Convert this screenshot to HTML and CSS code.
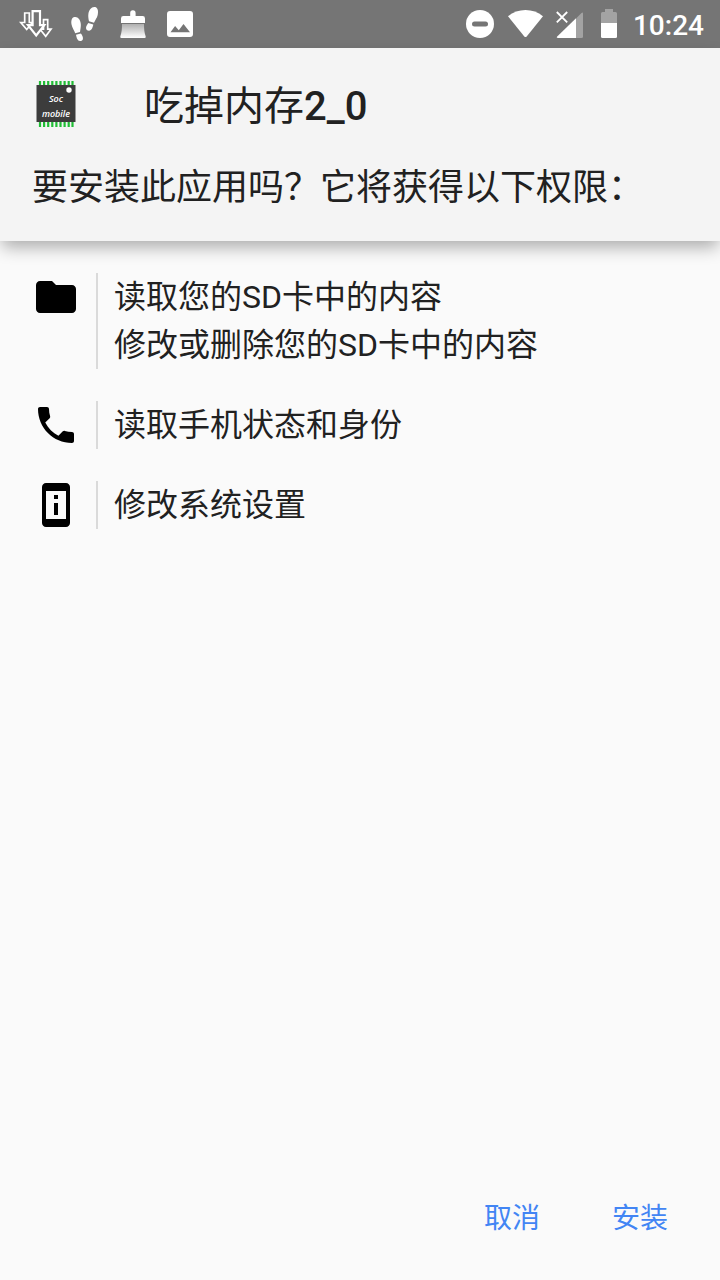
FILE: index.html
```html
<!DOCTYPE html>
<html lang="zh-CN">
<head>
<meta charset="utf-8">
<meta name="viewport" content="width=device-width, initial-scale=1">
<title>吃掉内存2_0</title>
<link rel="stylesheet" href="styles.css">
</head>
<body>
<div class="screen">
  <div class="status-bar">
    <div class="status-group">
      <svg class="status-icon" viewBox="0 0 48 48" aria-hidden="true">
        <g fill="#757575" stroke="#fff" stroke-width="1.7">
          <path d="M12.7 13h4.6v9.5h3.2L14.7 29.500 8.800 22.500h3.900z"/>
          <path d="M31.500 19.700h4.200v9.500h3.300L33.700 36.300 28 29.200h3.500z"/>
          <path stroke-width="2.200" d="M20.600 11.100h7.400v14h4.300L24.200 35.500 16 25.100h4.600z"/>
        </g>
      </svg>
      <svg class="status-icon" viewBox="0 0 48 48" aria-hidden="true">
        <g fill="#fff">
          <path d="M14.500 17c3.300-.6 6 2.600 6.300 7 .2 2.800-.4 5.500-.8 8l-4.800 1.300c-.8-2.700-3-5.600-3.600-8.600-.8-4 .2-7.200 2.900-7.700z"/>
          <path d="M16 34.700l4.900-1.200c1.300 1.600 2.400 3.800 2 5.500-.3 1.500-1.500 2.100-3 2-2.300-.2-3.300-3-3.900-6.300z"/>
          <path d="M35 7c2.800.5 3.600 4 2.700 8-.7 3-2.700 5.300-3.700 7.800l-5-1.500c-.5-2.400-1-4.800-.6-7.500.6-4.200 3.300-7.400 6.600-6.800z"/>
          <path d="M28.300 23l5 1.500c-.6 3.100-1.800 6-4.200 6.200-1.700.1-3.100-1-3.100-2.700 0-1.600 1.200-3.500 2.300-5z"/>
        </g>
      </svg>
      <svg class="status-icon" viewBox="0 0 48 48" aria-hidden="true">
        <defs>
          <linearGradient id="bristles" x1="0" y1="0" x2="0" y2="1">
            <stop offset="0" stop-color="#b0b0b0"/>
            <stop offset="1" stop-color="#fff"/>
          </linearGradient>
        </defs>
        <path fill="#fff" d="M22.200 16v-3a2.700 2.700 0 0 1 5.400 0v3h7a2.400 2.400 0 0 1 2.400 2.400V23H13v-4.600a2.400 2.400 0 0 1 2.400-2.400z"/>
        <path fill="url(#bristles)" d="M14 24h22c0 5 .3 8.500 1.700 12.500q.3 1.500-1.200 1.500h-23q-1.500 0-1.200-1.500C13.700 32.500 14 29 14 24z"/>
      </svg>
      <svg class="status-icon" viewBox="0 0 48 48" aria-hidden="true">
        <path fill="#fff" fill-rule="evenodd" d="M14 11h20a3 3 0 0 1 3 3v20a3 3 0 0 1-3 3H14a3 3 0 0 1-3-3V14a3 3 0 0 1 3-3zm.5 21.300h19.500L27.500 24l-4.700 6.200-3.700-4.300z"/>
      </svg>
    </div>
    <div class="status-group">
      <svg class="status-icon" viewBox="0 0 48 48" aria-hidden="true">
        <circle cx="24" cy="24" r="14" fill="#fff"/>
        <path d="M18.500 24h11" stroke="#757575" stroke-width="5" stroke-linecap="round"/>
      </svg>
      <svg class="status-icon status-medium" viewBox="0 0 44 48" aria-hidden="true">
        <path fill="#fff" d="M4 16.200C9 12 15 10 21.500 10S34 12 39 16.200L22.700 36.500q-1.200 1.200-2.400 0z"/>
      </svg>
      <svg class="status-icon status-medium" viewBox="0 0 44 48" aria-hidden="true">
        <path fill="#a3a3a3" d="M28 18.500L33.500 13q1.500-1.300 1.500.5V36.500q0 1.500-1.500 1.500H28z"/>
        <path fill="#fff" d="M28 18.300V38H10q-2-.1-.8-1.500z"/>
        <path d="M8.800 12l10.400 10.400M19.200 12L8.800 22.400" stroke="#fff" stroke-width="1.800"/>
      </svg>
      <svg class="status-icon status-small" viewBox="0 0 34 48" aria-hidden="true">
        <path fill="#a3a3a3" d="M13 9h8v3h2.500q1.500 0 1.500 1.500V24H9V13.500Q9 12 10.500 12H13z"/>
        <path fill="#fff" d="M9 23h16v13.500q0 1.500-1.500 1.500h-13Q9 38 9 36.500z"/>
      </svg>
      <time class="clock">10:24</time>
    </div>
  </div>

  <header class="header">
    <div class="app-row">
      <svg class="app-icon" viewBox="0 0 48 48" role="img" aria-label="Soc mobile">
        <path d="M8 1v46M12.100 1v46M16.200 1v46M20.300 1v46M24.400 1v46M28.500 1v46M32.600 1v46M36.700 1v46M40.500 1v46" stroke="#20bd35" stroke-width="2.200"/>
        <rect x="4.500" y="5" width="39" height="37" fill="#3c3c3c"/>
        <circle cx="37" cy="10" r="2.700" fill="#fff"/>
        <text class="chip-text" x="24" y="22">Soc</text>
        <text class="chip-text" x="24" y="37">mobile</text>
      </svg>
      <h1 class="app-name">吃掉内存<span class="app-version">2_0</span></h1>
    </div>
    <p class="prompt">要安装此应用吗？它将获得以下权限：</p>
  </header>

  <main class="permissions">
    <section class="permission">
      <svg class="permission-icon" viewBox="0 0 24 24" aria-hidden="true">
        <path d="M10 4H4c-1.100 0-1.990.9-1.990 2L2 18c0 1.100.9 2 2 2h16c1.100 0 2-.9 2-2V8c0-1.100-.9-2-2-2h-8l-2-2z"/>
      </svg>
      <ul class="permission-list">
        <li>读取您的SD卡中的内容</li>
        <li>修改或删除您的SD卡中的内容</li>
      </ul>
    </section>
    <section class="permission">
      <svg class="permission-icon" viewBox="0 0 24 24" aria-hidden="true">
        <path d="M6.620 10.790c1.440 2.830 3.760 5.140 6.590 6.590l2.200-2.200c.27-.27.67-.36 1.020-.24 1.120.37 2.330.57 3.570.57.55 0 1 .45 1 1V20c0 .55-.45 1-1 1-9.390 0-17-7.610-17-17 0-.55.45-1 1-1h3.500c.55 0 1 .45 1 1 0 1.250.2 2.450.57 3.570.11.35.03.74-.25 1.020l-2.200 2.200z"/>
      </svg>
      <ul class="permission-list">
        <li>读取手机状态和身份</li>
      </ul>
    </section>
    <section class="permission">
      <svg class="permission-icon" viewBox="0 0 24 24" aria-hidden="true">
        <path d="M13 7h-2v2h2V7zm0 4h-2v6h2v-6zm4-9.990L7 1c-1.100 0-2 .9-2 2v18c0 1.100.9 2 2 2h10c1.100 0 2-.9 2-2V3c0-1.100-.9-1.990-2-1.990zM17 19H7V5h10v14z"/>
      </svg>
      <ul class="permission-list">
        <li>修改系统设置</li>
      </ul>
    </section>
  </main>

  <footer class="actions">
    <button class="action" type="button">取消</button>
    <button class="action" type="button">安装</button>
  </footer>
</div>
</body>
</html>
```
FILE: styles.css
```css
* {
  box-sizing: border-box;
}

body {
  margin: 0;
  background: #fafafa;
  color: #212121;
  font-family: Roboto, "Noto Sans CJK SC", sans-serif;
}

.screen {
  display: flex;
  flex-direction: column;
  min-height: 100vh;
  overflow-x: hidden;
}

.status-bar {
  display: flex;
  justify-content: space-between;
  padding: 0 16px 0 12px;
  background: #757575;
  color: #fff;
}

.status-group {
  display: flex;
  align-items: center;
}

.status-icon {
  display: block;
  width: 48px;
  height: 48px;
  fill: none;
}

.status-medium {
  width: 44px;
}

.status-small {
  width: 34px;
}

.clock {
  margin-left: 7px;
  padding-top: 4px;
  font-size: 28px;
  font-weight: 500;
  line-height: 44px;
}

.header {
  padding: 32px 32px 30px;
  background: #f4f4f4;
  box-shadow: 0 8px 16px -2px rgba(0, 0, 0, 0.32);
}

.app-row {
  display: flex;
  align-items: center;
  gap: 64px;
}

.app-icon {
  flex: none;
  width: 48px;
  height: 48px;
}

.chip-text {
  fill: #fff;
  font-family: "Open Sans", sans-serif;
  font-size: 9px;
  font-style: italic;
  font-weight: 600;
  text-anchor: middle;
}

.app-name {
  margin: 0;
  padding-top: 6px;
  font-size: 40px;
  font-weight: 400;
  line-height: 42px;
}

.app-version {
  font-weight: 500;
}

.prompt {
  margin: 38px 0 0;
  font-size: 36px;
  line-height: 45px;
}

.permissions {
  display: flex;
  flex: 1;
  flex-direction: column;
  gap: 32px;
  padding: 32px;
}

.permission {
  display: flex;
  gap: 16px;
}

.permission-icon {
  flex: none;
  width: 48px;
  height: 48px;
  fill: #000;
}

.permission-list {
  flex: 1;
  margin: 0;
  padding: 0 0 0 16px;
  border-left: 2px solid #dadada;
  font-size: 32px;
  line-height: 48px;
  list-style: none;
}

.actions {
  display: flex;
  justify-content: flex-end;
  padding: 16px;
}

.action {
  width: 128px;
  height: 96px;
  padding: 0;
  border: 0;
  background: transparent;
  color: #4285f4;
  font: inherit;
  font-size: 28px;
  cursor: pointer;
}
```
